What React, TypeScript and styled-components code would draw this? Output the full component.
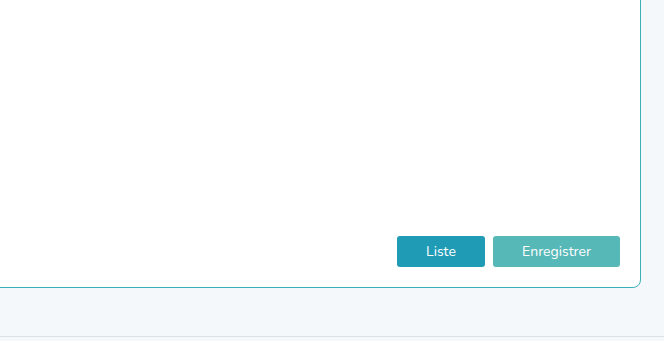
import React from "react";
import styled, { createGlobalStyle } from "styled-components";

const Global = createGlobalStyle`
  html, body { margin: 0; padding: 0; }
  body {
    background: #f4f8fb;
    font-family: "Nunito", Lato, "Open Sans", sans-serif;
    width: 664px;
    height: 341px;
    overflow: hidden;
  }
`;

const Page = styled.div`
  display: flex;
  flex-direction: column;
  height: 341px;
`;

const Main = styled.main`
  flex: 0 0 336px;
  display: flex;
  flex-direction: column;
`;

const Card = styled.section`
  box-sizing: border-box;
  height: 290px;
  margin: -2px 23px 0 -2px;
  background: #ffffff;
  border: 1px solid #3bb1b5;
  border-radius: 0 0 8px 0;
  display: flex;
  flex-direction: column;
  justify-content: flex-end;
  padding: 0 20px 20px 0;
`;

const Actions = styled.div`
  display: flex;
  justify-content: flex-end;
  gap: 8px;
`;

const Button = styled.button<{ $variant: "primary" | "secondary" }>`
  box-sizing: border-box;
  height: 31px;
  width: ${(p) => (p.$variant === "primary" ? "88px" : "127px")};
  border: none;
  border-radius: 3px;
  background: ${(p) => (p.$variant === "primary" ? "#1f9bb6" : "#57b8b8")};
  color: #ffffff;
  font-family: "Nunito", Lato, "Open Sans", sans-serif;
  font-size: 14px;
  line-height: 31px;
  padding: 0;
  cursor: pointer;
`;

const Footer = styled.footer`
  flex: 1;
  border-top: 1px solid #dde1e5;
  background: #f4f8fb;
`;

export default function App() {
  return (
    <>
      <Global />
      <Page>
        <Main>
          <Card>
            <Actions>
              <Button $variant="primary">Liste</Button>
              <Button $variant="secondary">Enregistrer</Button>
            </Actions>
          </Card>
        </Main>
        <Footer />
      </Page>
    </>
  );
}
